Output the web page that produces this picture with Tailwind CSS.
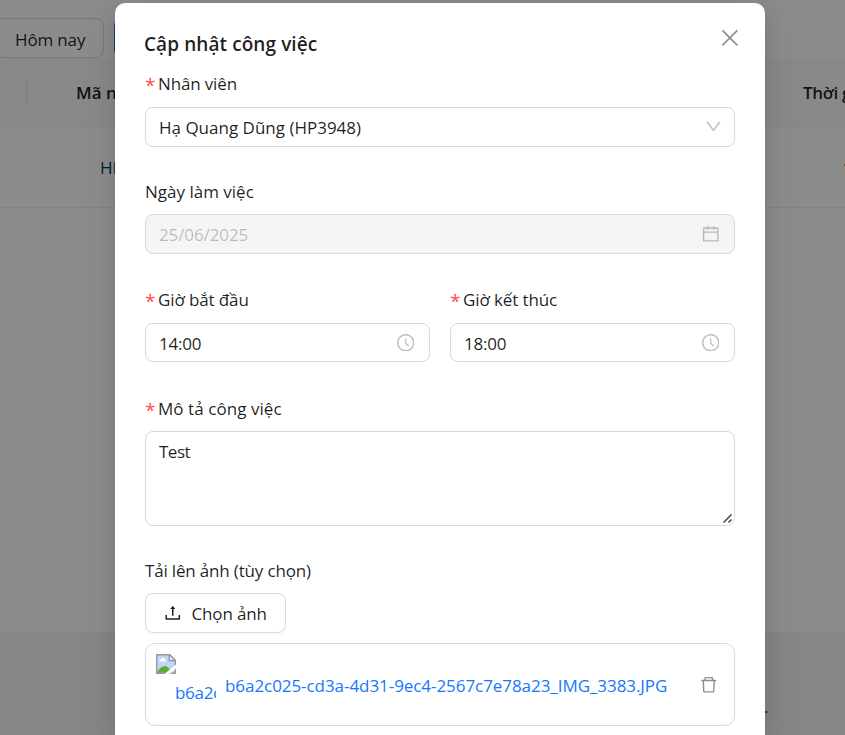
<!DOCTYPE html>
<html lang="vi">
<head>
<meta charset="utf-8">
<title>Cập nhật công việc</title>
<script src="https://cdn.jsdelivr.net/npm/@tailwindcss/browser@4"></script>
</head>
<body class="relative h-[735px] w-[845px] overflow-hidden bg-white font-['Open_Sans','Noto_Sans',sans-serif] text-[17px] leading-[27px] text-black/88">

<svg class="hidden">
  <symbol id="clock" viewBox="64 64 896 896"><path d="M512 64C264.6 64 64 264.6 64 512s200.6 448 448 448 448-200.6 448-448S759.4 64 512 64zm0 820c-205.4 0-372-166.6-372-372s166.6-372 372-372 372 166.6 372 372-166.6 372-372 372z"/><path d="M686.7 638.6L544.1 535.5V288c0-4.4-3.6-8-8-8H488c-4.4 0-8 3.6-8 8v275.4c0 2.6 1.2 5 3.3 6.5l165.4 120.6c3.6 2.6 8.6 1.8 11.2-1.7l28.6-39c2.6-3.7 1.8-8.7-1.8-11.2z"/></symbol>
</svg>

<!-- Page behind the dialog -->
<div class="flex h-full flex-col overflow-hidden">
  <div class="flex h-[58px] gap-[10px] pt-[18px]">
    <div class="-ml-1 flex h-10 w-[108px] items-center rounded-lg border border-[#d9d9d9] pt-[2px] pl-[18px] tracking-[-0.15px]">Hôm nay</div>
    <div class="h-10 w-12 rounded-lg bg-[#1677ff]"></div>
  </div>
  <div class="flex h-[69px] items-center border-b border-[#f0f0f0] bg-[#fafafa] font-semibold whitespace-nowrap">
    <div class="h-7 w-[27px] shrink-0 border-r border-[#e8e8e8]"></div>
    <div class="w-[776px] shrink-0 pl-[49px]">Mã n</div>
    <div class="shrink-0 tracking-[-0.3px]">Thời g</div>
  </div>
  <div class="flex h-[81px] items-center border-b border-[#f0f0f0]">
    <div class="w-[844px] shrink-0 pl-[100px] text-[#003b6b]">HP</div>
    <div class="mt-[-5px] h-[2px] w-px bg-[#fa8c16]"></div>
  </div>
  <div class="h-[424px]"></div>
  <div class="flex-1 bg-[#f5f5f5] pt-[61px] pl-[764px]">.</div>
</div>

<div class="absolute inset-0 bg-black/45"></div>

<!-- Dialog -->
<div class="absolute top-[3px] left-[115px] flex h-[732px] w-[650px] flex-col rounded-t-[10px] bg-white px-[30px] pt-[28px] shadow-[0_8px_20px_0_rgba(0,0,0,0.08),0_4px_8px_-5px_rgba(0,0,0,0.12),0_11px_35px_10px_rgba(0,0,0,0.05)]">
  <div class="flex h-[27px] items-center justify-between">
    <h1 class="-ml-px text-[19px] font-semibold tracking-[0.08px]">Cập nhật công việc</h1>
    <svg class="-mt-[14px] mr-[-5px] h-5 w-5 text-black/45" viewBox="0 0 20 20" fill="none" stroke="currentColor" stroke-width="1.6"><path d="M2.4 2.4 17.4 17.4M17.4 2.4 2.4 17.4"/></svg>
  </div>

  <div class="mt-3 flex h-[37px] items-start gap-1 tracking-[-0.15px]"><span class="w-[9px] pt-[2px] text-[19px] text-[#ff4d4f]">*</span><span>Nhân viên</span></div>
  <div class="flex h-10 items-center justify-between rounded-lg border border-[#d9d9d9] pr-3 pl-[13px]">
    <span>Hạ Quang Dũng (HP3948)</span>
    <svg class="-mt-[1px] h-[17px] w-[17px] text-black/25" viewBox="64 64 896 896" fill="currentColor"><path d="M884 256h-75c-5.1 0-9.9 2.5-12.9 6.6L512 654.2 227.9 262.6c-3-4.1-7.8-6.6-12.9-6.6h-75c-6.5 0-10.3 7.4-6.5 12.7l352.6 486.1c12.8 17.6 39 17.6 51.7 0l352.6-486.1c3.9-5.3.1-12.7-6.4-12.7z"/></svg>
  </div>

  <div class="mt-[31px] h-9">Ngày làm việc</div>
  <div class="flex h-10 items-center justify-between rounded-lg border border-[#d9d9d9] bg-[#f5f5f5] pr-[15px] pl-[13px] text-black/25">
    <span class="tracking-[-0.1px]">25/06/2025</span>
    <svg class="h-[17.5px] w-[17.5px]" viewBox="64 64 896 896" fill="currentColor"><path d="M880 184H712v-64c0-4.4-3.6-8-8-8h-56c-4.4 0-8 3.6-8 8v64H384v-64c0-4.4-3.6-8-8-8h-56c-4.4 0-8 3.6-8 8v64H144c-17.7 0-32 14.3-32 32v664c0 17.7 14.3 32 32 32h736c17.7 0 32-14.3 32-32V216c0-17.7-14.3-32-32-32zm-40 656H184V460h656v380zM184 392V256h128v48c0 4.4 3.6 8 8 8h56c4.4 0 8-3.6 8-8v-48h256v48c0 4.4 3.6 8 8 8h56c4.4 0 8-3.6 8-8v-48h128v136H184z"/></svg>
  </div>

  <div class="mt-8 grid grid-cols-2 gap-5">
    <div>
      <div class="flex h-[37px] gap-1 tracking-[-0.12px]"><span class="w-[9px] pt-[2px] text-[19px] text-[#ff4d4f]">*</span><span>Giờ bắt đầu</span></div>
      <div class="flex h-[39px] items-center justify-between rounded-lg border border-[#d9d9d9] pr-[15px] pl-[13px]"><span class="pt-px tracking-[-0.25px]">14:00</span><svg class="h-[17.5px] w-[17.5px] text-black/25" fill="currentColor"><use href="#clock"/></svg></div>
    </div>
    <div>
      <div class="flex h-[37px] gap-1 tracking-[-0.12px]"><span class="w-[9px] pt-[2px] text-[19px] text-[#ff4d4f]">*</span><span>Giờ kết thúc</span></div>
      <div class="flex h-[39px] items-center justify-between rounded-lg border border-[#d9d9d9] pr-[15px] pl-[13px]"><span class="pt-px tracking-[-0.25px]">18:00</span><svg class="h-[17.5px] w-[17.5px] text-black/25" fill="currentColor"><use href="#clock"/></svg></div>
    </div>
  </div>

  <div class="mt-[33px] flex h-9 gap-1"><span class="w-[9px] pt-[2px] text-[19px] text-[#ff4d4f]">*</span><span class="tracking-[0.06px]">Mô tả công việc</span></div>
  <div class="flex h-[95px] items-start justify-between rounded-lg border border-[#d9d9d9] pt-[6px] pr-px pb-px pl-[13px]">
    <span class="tracking-[-0.5px]">Test</span>
    <svg class="h-[10px] w-[10px] self-end" viewBox="0 0 10 10" fill="none" stroke="#444" stroke-width="1.5"><path d="M.5 8.5 8.5.5M5.500 8.500 8.500 5.500"/></svg>
  </div>

  <div class="mt-[31px] h-9 tracking-[-0.17px]">Tải lên ảnh (tùy chọn)</div>
  <div class="flex h-10 w-[141px] shrink-0 items-center gap-[10px] rounded-lg border border-[#d9d9d9] pl-[18px] shadow-[0_2px_0_rgba(0,0,0,0.02)]">
    <svg class="h-[17.5px] w-[17.5px]" viewBox="64 64 896 896" fill="currentColor"><path d="M400 317.7h73.9V656c0 4.4 3.6 8 8 8h60c4.4 0 8-3.6 8-8V317.7H624c6.7 0 10.4-7.7 6.3-12.9L518.3 163a8 8 0 00-12.6 0l-112 141.7c-4.1 5.3-.4 13 6.3 13zM878 626h-60c-4.4 0-8 3.6-8 8v154H214V634c0-4.4-3.6-8-8-8h-60c-4.4 0-8 3.6-8 8v198c0 17.7 14.3 32 32 32h684c17.7 0 32-14.3 32-32V634c0-4.4-3.6-8-8-8z"/></svg>
    <span class="pt-px tracking-[-0.15px]">Chọn ảnh</span>
  </div>

  <div class="mt-[10px] flex h-[83px] shrink-0 items-center rounded-[10px] border border-[#d9d9d9] pl-[10px] text-[#1677ff]">
    <div class="flex h-[61px] w-[60px] items-start overflow-hidden">
      <svg class="h-5 w-5 shrink-0" viewBox="0 0 20 20">
        <path fill="#c2d5f7" d="M0 0H14L20 6V20H0Z"/>
        <path fill="#fff" d="M3 7.5q0-2 2-2 1-2.5 3-1.500 1 .5 1 1.500 1 .5 1 2Z"/>
        <path fill="#5aad36" d="M1 19q2-6 8-7 4 0 6 7Z"/>
        <path fill="none" stroke="#999" stroke-width="1.4" d="M.7.7H13.500L19.300 6.500V19.300H.7Z"/>
        <path fill="#fff" stroke="#999" stroke-width="1.4" d="M13.300.7V6.500H19.300Z"/>
        <path fill="#fff" d="M20 10.500 8.500 20H13.500L20 14.500Z"/>
      </svg>
      <span class="-ml-px mt-[25px] tracking-[-0.3px]">b6a2c025</span>
    </div>
    <span class="ml-[9px] pt-px tracking-[-0.06px] whitespace-nowrap">b6a2c025-cd3a-4d31-9ec4-2567c7e78a23_IMG_3383.JPG</span>
    <svg class="mr-[17px] ml-auto h-[17.5px] w-[17.5px] text-black/45" viewBox="64 64 896 896" fill="currentColor"><path d="M360 184h-8c4.4 0 8-3.6 8-8v8h304v-8c0 4.4 3.6 8 8 8h-8v72h72v-80c0-35.3-28.7-64-64-64H352c-35.3 0-64 28.700-64 64v80h72v-72zm504 72H160c-17.700 0-32 14.300-32 32v32c0 4.400 3.600 8 8 8h60.400l24.700 523c1.600 34.100 29.800 61 63.900 61h454c34.200 0 62.300-26.800 63.900-61l24.700-523H888c4.400 0 8-3.600 8-8v-32c0-17.700-14.300-32-32-32zM731.300 840H292.700l-24.200-512h487l-24.200 512z"/></svg>
  </div>
</div>
</body>
</html>
